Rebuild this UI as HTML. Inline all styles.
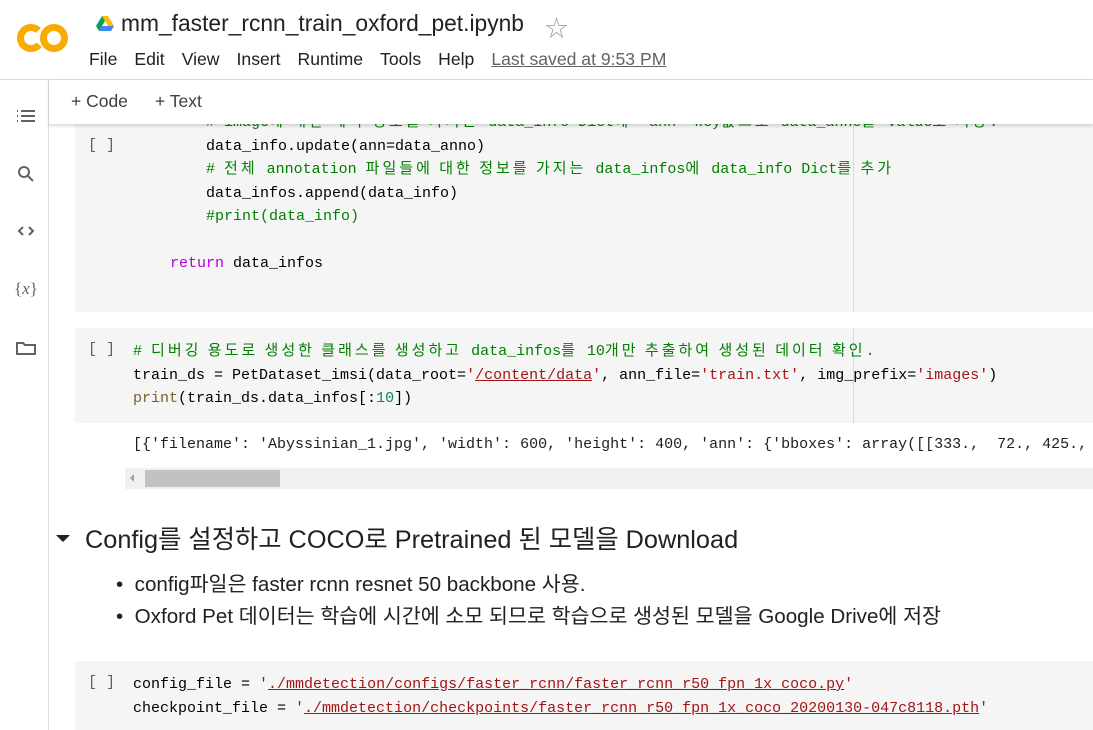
<!DOCTYPE html>
<html><head><meta charset="utf-8"><style>
*{margin:0;padding:0;box-sizing:border-box}
body{width:1093px;height:730px;overflow:hidden;background:#fff;position:relative;font-family:"Liberation Sans","Noto Sans CJK KR",sans-serif;color:#212121}
.abs{position:absolute}
.mono{font-family:"Liberation Mono","Noto Sans CJK KR",monospace;font-size:15px;color:#000}
.mono div{height:23.5px;line-height:23.5px;overflow:visible;white-space:pre}
.k{font-family:"Noto Sans CJK KR",sans-serif;letter-spacing:3px;font-size:15px;line-height:10px}
.cm{color:#008000}.kw{color:#af00db}.st{color:#a31515}.bi{color:#795e26}.nu{color:#098658}
.u{text-decoration:underline;text-decoration-color:#a31515}
.br{color:#616161;font-family:"Liberation Mono",monospace;font-size:15px}
.cell{position:absolute;left:75px;right:0;background:#f5f5f5}
.menu span{margin-right:17px}
</style></head><body>
<!-- header -->
<div class="abs" style="left:0;top:0;width:1093px;height:80px;border-bottom:1px solid #dadce0;background:#fff"></div>
<svg class="abs" style="left:16px;top:20px" width="56" height="36" viewBox="0 0 56 36">
<circle cx="15" cy="18" r="10.5" fill="none" stroke="#f9ab00" stroke-width="7" stroke-dasharray="50 16" transform="rotate(40 15 18)"/>
<circle cx="38" cy="18" r="10.5" fill="none" stroke="#f9ab00" stroke-width="7"/>
</svg>
<svg class="abs" style="left:96px;top:16px" width="18" height="16" viewBox="0 0 18 16">
<polygon points="6,0 12,0 18,10 15,15" fill="#fbbc04"/><polygon points="6,0 0,10 3,15 9,5" fill="#0f9d58"/><polygon points="3,15 15,15 18,10 6,10" fill="#4285f4"/></svg>
<div class="abs" style="left:121px;top:10px;font-size:22.8px;color:#202124">mm_faster_rcnn_train_oxford_pet.ipynb</div>
<div class="abs" style="left:545px;top:9px;font-size:23px;color:#9e9e9e">☆</div>
<div class="abs menu" style="left:89px;top:49px;font-size:17.6px;color:#202124;white-space:nowrap"><span>File</span><span>Edit</span><span>View</span><span>Insert</span><span>Runtime</span><span>Tools</span><span>Help</span><span style="color:#5f6368;text-decoration:underline">Last saved at 9:53 PM</span></div>
<!-- sidebar -->
<div class="abs" style="left:48px;top:80px;width:1px;height:650px;background:#dadce0"></div>
<svg class="abs" style="left:14px;top:106px" width="24" height="260" viewBox="0 0 24 260" fill="none" stroke="#5f6368" stroke-width="2">
<path d="M3 5h1M3 10h1M3 15h1M7 5h14M7 10h14M7 15h14"/>
<circle cx="10" cy="66" r="5"/><path d="M14 70l5 5"/>
<path d="M9 121l-4 4 4 4M15 121l4 4-4 4"/>
<path d="M3 248v-11h6l2 2h10v9z"/>
</svg>
<div class="abs" style="left:14px;top:279px;font-family:'Liberation Serif',serif;font-size:17px;color:#5f6368">{<i>x</i>}</div>
<!-- cell1 -->
<div class="cell" style="top:112px;height:200px"></div>
<div class="abs" style="left:853px;top:124px;width:1px;height:188px;background:#dadada"></div>
<div class="abs br" style="left:88px;top:137px">[ ]</div>
<div class="abs mono" style="left:170px;top:111px"><div>    <span class="cm"># image<span class="k">에 대한 메타 정보를 가지는</span> data_info Dict<span class="k">에</span> 'ann' key<span class="k">값으로</span> data_anno<span class="k">를</span> value<span class="k">로 저장</span>.</span></div><div>    data_info.update(ann=data_anno)</div><div>    <span class="cm"># <span class="k">전체</span> annotation <span class="k">파일들에 대한 정보를 가지는</span> data_infos<span class="k">에</span> data_info Dict<span class="k">를 추가</span></span></div><div>    data_infos.append(data_info)</div><div>    <span class="cm">#print(data_info)</span></div><div> </div><div><span class="kw">return</span> data_infos</div></div>
<!-- toolbar -->
<div class="abs" style="left:49px;top:80px;width:1044px;height:44px;background:#fff;box-shadow:0 2px 3px rgba(0,0,0,0.15)"></div>
<div class="abs" style="left:71px;top:91px;font-size:17.5px;color:#3c4043;white-space:pre">+ Code</div>
<div class="abs" style="left:155px;top:91px;font-size:17.5px;color:#3c4043;white-space:pre">+ Text</div>
<!-- cell2 -->
<div class="cell" style="top:328px;height:95px"></div>
<div class="abs" style="left:853px;top:328px;width:1px;height:95px;background:#dadada"></div>
<div class="abs br" style="left:88px;top:341px">[ ]</div>
<div class="abs mono" style="left:133px;top:340px"><div><span class="cm"># <span class="k">디버깅 용도로 생성한 클래스를 생성하고</span> data_infos<span class="k">를</span> 10<span class="k">개만 추출하여 생성된 데이터 확인</span>.</span></div><div>train_ds = PetDataset_imsi(data_root=<span class="st">'<span class="u">/content/data</span>'</span>, ann_file=<span class="st">'train.txt'</span>, img_prefix=<span class="st">'images'</span>)</div><div><span class="bi">print</span>(train_ds.data_infos[:<span class="nu">10</span>])</div></div>
<div class="abs mono" style="left:133px;top:433px;color:#212121"><div>[{'filename': 'Abyssinian_1.jpg', 'width': 600, 'height': 400, 'ann': {'bboxes': array([[333.,  72., 425.,</div></div>
<div class="abs" style="left:125px;top:468px;width:968px;height:21px;background:#f0f0f0"></div>
<div class="abs" style="left:145px;top:470px;width:135px;height:17px;background:#c1c1c1"></div>
<div class="abs" style="left:130px;top:474px;width:0;height:0;border-top:4px solid transparent;border-bottom:4px solid transparent;border-right:4px solid #a3a3a3"></div>
<!-- text cell -->
<div class="abs" style="left:56px;top:535px;width:0;height:0;border-left:7px solid transparent;border-right:7px solid transparent;border-top:7px solid #212121"></div>
<div class="abs" style="left:85px;top:520px;font-size:25.3px;white-space:nowrap">Config를 설정하고 COCO로 Pretrained 된 모델을 Download</div>
<div class="abs" style="left:116px;top:569px;font-size:20.6px;line-height:32px;white-space:nowrap"><div>•&nbsp;&nbsp;config파일은 faster rcnn resnet 50 backbone 사용.</div><div>•&nbsp;&nbsp;Oxford Pet 데이터는 학습에 시간에 소모 되므로 학습으로 생성된 모델을 Google Drive에 저장</div></div>
<!-- cell3 -->
<div class="cell" style="top:661px;height:69px"></div>
<div class="abs br" style="left:88px;top:674px">[ ]</div>
<div class="abs mono" style="left:133px;top:673px"><div>config_file = <span class="st">'<span class="u">./mmdetection/configs/faster_rcnn/faster_rcnn_r50_fpn_1x_coco.py</span>'</span></div><div>checkpoint_file = <span class="st">'<span class="u">./mmdetection/checkpoints/faster_rcnn_r50_fpn_1x_coco_20200130-047c8118.pth</span>'</span></div></div>
</body></html>
